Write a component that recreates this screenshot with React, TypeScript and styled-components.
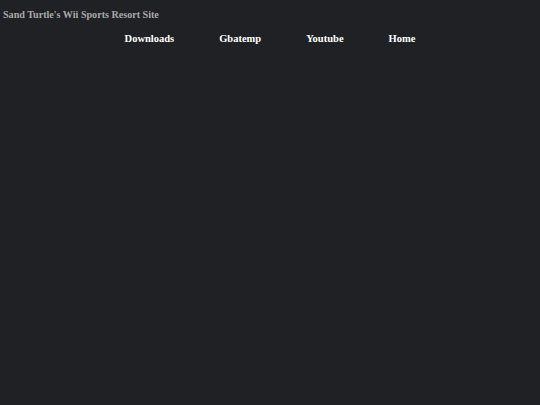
import { createGlobalStyle, styled } from "styled-components";

const GlobalStyle = createGlobalStyle`
  html, body {
    margin: 0;
    padding: 0;
    background: #202124;
    min-height: 100%;
  }
  body {
    font-family: "Liberation Serif", "Times New Roman", serif;
  }
`;

const Page = styled.div`
  min-height: 405px;
  background: #202124;
`;

const Header = styled.header`
  padding: 9px 3px 0 3px;
`;

const SiteTitle = styled.div`
  color: #a9a9a9;
  font-size: 10.1px;
  font-weight: 700;
  line-height: 12px;
`;

const Nav = styled.nav`
  display: flex;
  justify-content: center;
  gap: 45px;
  margin-top: 11px;
`;

const NavLink = styled.a`
  color: #ffffff;
  font-size: 10.5px;
  font-weight: 700;
  text-decoration: none;
  line-height: 14px;
`;

const links = ["Downloads", "Gbatemp", "Youtube", "Home"];

const App = () => {
  return (
    <Page>
      <GlobalStyle />
      <Header>
        <SiteTitle>Sand Turtle's Wii Sports Resort Site</SiteTitle>
        <Nav>
          {links.map((l) => (
            <NavLink key={l} href="#">
              {l}
            </NavLink>
          ))}
        </Nav>
      </Header>
    </Page>
  );
};

export default App;
